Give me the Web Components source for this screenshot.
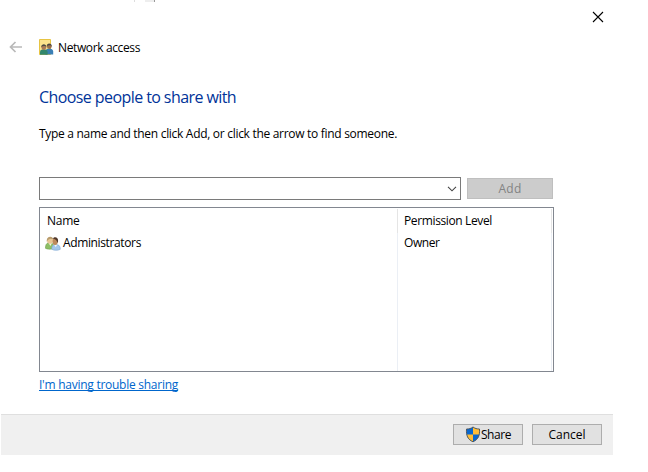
<!DOCTYPE html>
<html lang="en">
<head>
<meta charset="utf-8">
<title>Network access</title>
<style>
  body {
    margin: 0;
    background: #fff;
    color: #000;
    font: 12px/16px "Open Sans", "Noto Sans", sans-serif;
  }
</style>
</head>
<body>
<share-dialog></share-dialog>

<script>
// One line of text, letter-spaced to fill the given width
class FitText extends HTMLElement {
    constructor() {
        super();
        this.attachShadow({mode: 'open'}).innerHTML = `
          <style>
            :host { display: block; white-space: nowrap; }
            span { display: inline-block; }
          </style>
          <span><slot></slot></span>`;
    }
    connectedCallback() {
        let span = this.shadowRoot.querySelector('span');
        let width = Number(this.getAttribute('width'));
        let count = this.textContent.length;
        let spacing = (width - span.getBoundingClientRect().width) / count;
        span.style.letterSpacing = spacing.toFixed(3) + 'px';
    }
}

const icons = {
    back: `<svg width="14" height="12" viewBox="0 0 14 12" fill="none" stroke="#b9b9b9" stroke-width="1.7">
        <path d="M1.500 6H13M6.500 1L1.500 6l5 5"/></svg>`,
    close: `<svg width="12" height="12" viewBox="0 0 12 12" stroke="#000" stroke-width="1.1">
        <path d="M1 1l10 10M11 1L1 11"/></svg>`,
    chevron: `<svg width="10" height="6" viewBox="0 0 10 6" fill="none" stroke="#444" stroke-width="1.1">
        <path d="M1 .8l4 4 4-4"/></svg>`,
    network: `<svg width="15" height="17" viewBox="0 0 15 17">
        <path d="M.5.5h11v15H.5z" fill="#fbe28c" stroke="#e7c443"/>
        <path d="M6.500 15.500v-3c0-2 1.600-3 3.700-3s4 1 4 3v3z" fill="#3a7fb5"/>
        <circle cx="10.300" cy="7.600" r="2.400" fill="#99704e"/>
        <path d="M7.700 7.300c0-4 5.300-3.700 5.200.4-1-1.600-3-2-5.200-.4z" fill="#4b4741"/>
        <path d="M1 15.800v-2.600c0-2.200 1.500-3 3.600-3s4 .8 4 3v2.600z" fill="#32866c"/>
        <circle cx="4.800" cy="8.500" r="2.400" fill="#a97a56"/>
        <path d="M2.200 8.200c.1-3.900 5.200-3.800 5.200 0-1-1.400-3.200-1.800-5.200 0z" fill="#4d4a42"/></svg>`,
    people: `<svg width="16" height="15" viewBox="0 0 16 15">
        <path d="M.5 12.300c0-4 1.200-5.600 4.200-5.600s4.200 1.800 4.200 5.600c-2 1.200-6.400 1.200-8.400 0z" fill="#8fbf66" stroke="#6a9d48" stroke-width=".6"/>
        <path d="M3.600 7l1.800 3L7 7z" fill="#eef4e4"/>
        <ellipse cx="5" cy="4.500" rx="2.900" ry="3.300" fill="#e8c795"/>
        <path d="M1.800 5.800C.8-.3 8-.9 8.200 3.500c-2-1-4.600-1.200-6.400 2.300z" fill="#b79b6c"/>
        <path d="M6.800 13.300c0-3.400 1-4.800 4-4.800s4.500 1.400 4.500 4.800c-2 1.300-6.500 1.300-8.500 0z" fill="#a3c8ec" stroke="#7da8d4" stroke-width=".6"/>
        <path d="M9 8.600l1.700 2.600 1.600-2.600z" fill="#edf5fc"/>
        <ellipse cx="10.100" cy="5.600" rx="2.600" ry="3.500" fill="#bd8a5b"/>
        <path d="M8 2.700C9 .2 13.600.8 13.100 5.300l-.8 1.900c-.1-2.400-1.200-4-4.300-4.500z" fill="#52382b"/></svg>`,
    shield: `<svg width="16" height="17" viewBox="0 0 16 17">
        <path id="bg" d="M8 1C6 2.500 4 3 1.500 3c-.4 6.500 1 10.300 6.500 12.800C13.500 13.300 14.900 9.500 14.500 3 12 3 10 2.500 8 1z" fill="#0867cf"/>
        <path d="M8 1c2 1.500 4 2 6.500 2 .1 2.100 0 3.900-.3 5.500H8zM1.800 8.500H8v7.300C4.300 14.100 2.400 11.800 1.800 8.500z" fill="#ffbd37"/>
        <path d="M8 1C6 2.500 4 3 1.500 3c-.4 6.500 1 10.300 6.500 12.800C13.500 13.300 14.900 9.500 14.500 3 12 3 10 2.500 8 1z" fill="none" stroke="#4c5157" stroke-width=".9"/></svg>`
};

class UiIcon extends HTMLElement {
    constructor() {
        super();
        this.attachShadow({mode: 'open'});
    }
    connectedCallback() {
        this.shadowRoot.innerHTML = `
          <style>
            :host { display: block; flex: none; }
            svg { display: block; }
          </style>
          ${icons[this.getAttribute('name')]}`;
    }
}

class PushButton extends HTMLElement {
    constructor() {
        super();
        this.attachShadow({mode: 'open'}).innerHTML = `
          <style>
            :host {
              display: flex;
              align-items: center;
              justify-content: center;
              box-sizing: border-box;
              width: 70px;
              height: 21px;
              border: 1px solid #adadad;
              background: #e1e1e1;
            }
            :host([disabled]) {
              width: 86px;
              border-color: #bfbfbf;
              background: #ccc;
              color: #838383;
            }
          </style>
          <slot name="icon"></slot><slot></slot>`;
    }
}

class ComboBox extends HTMLElement {
    constructor() {
        super();
        this.attachShadow({mode: 'open'}).innerHTML = `
          <style>
            :host {
              display: flex;
              align-items: center;
              justify-content: flex-end;
              box-sizing: border-box;
              width: 422px;
              height: 23px;
              padding-right: 3px;
              border: 1px solid #7a7a7a;
            }
          </style>
          <ui-icon name="chevron"></ui-icon>`;
    }
}

class PeopleList extends HTMLElement {
    constructor() {
        super();
        this.attachShadow({mode: 'open'}).innerHTML = `
          <style>
            :host {
              display: grid;
              grid-template-columns: 358px 154px;
              box-sizing: border-box;
              width: 515px;
              height: 165px;
              padding-top: 1px;
              border: 1px solid #828790;
            }
            .col { border-right: 1px solid #ebeff5; }
            .head {
              height: 20px;
              margin-right: -1px;
              padding: 4px 0 0 7px;
              border-right: 1px solid #e5e5e5;
            }
            .level .head { padding-left: 6px; }
            .cell { display: flex; padding: 2px 0 0 5px; gap: 2px; }
            .level .cell { padding-left: 6px; }
          </style>
          <div class="col">
            <div class="head"><slot name="name-head"></slot></div>
            <div class="cell"><slot name="name"></slot></div>
          </div>
          <div class="col level">
            <div class="head"><slot name="level-head"></slot></div>
            <div class="cell"><slot name="level"></slot></div>
          </div>`;
    }
}

class ShareDialog extends HTMLElement {
    constructor() {
        super();
        this.attachShadow({mode: 'open'}).innerHTML = `
          <style>
            :host {
              display: flex;
              flex-direction: column;
              width: 612px;
              height: 455px;
              margin-left: 1px;
            }
            /* edge of the window behind */
            .behind { display: flex; height: 2px; padding-left: 133px; gap: 10px; }
            .behind i { width: 1px; background: #ddd; }
            .behind i + i { width: 9px; background: #eee; border-right: 1px solid #999; }
            .top { display: flex; justify-content: flex-end; height: 22px; padding: 9px 9px 0 0; }
            .title { display: flex; align-items: center; height: 20px; margin-top: 4px; padding-left: 8px; }
            .title ui-icon + ui-icon { margin: 0 4px 0 16px; }
            .title fit-text { padding-top: 2px; }
            main { display: flex; flex-direction: column; flex: 1; padding: 28px 0 0 38px; }
            .heading { color: #039; font-size: 16px; line-height: 24px; }
            .hint { margin-top: 17px; }
            .row { display: flex; align-items: center; gap: 6px; margin: 35px 0 7px; }
            .entry { display: flex; align-items: center; gap: 2px; }
            .link {
              align-self: flex-start;
              height: 13px;
              margin-top: 5px;
              color: #0066cc;
              border-bottom: 1px solid #0066cc;
            }
            footer {
              display: flex;
              justify-content: flex-end;
              gap: 9px;
              box-sizing: border-box;
              height: 41px;
              padding: 9px 11px 0 0;
              border-top: 1px solid #dfdfdf;
              background: #f0f0f0;
            }
          </style>
          <div class="behind"><i></i><i></i></div>
          <div class="top"><ui-icon name="close"></ui-icon></div>
          <div class="title">
            <ui-icon name="back"></ui-icon>
            <ui-icon name="network"></ui-icon>
            <fit-text width="82">Network access</fit-text>
          </div>
          <main>
            <fit-text class="heading" width="197">Choose people to share with</fit-text>
            <fit-text class="hint" width="358">Type a name and then click Add, or click the arrow to find someone.</fit-text>
            <div class="row">
              <combo-box></combo-box>
              <push-button disabled><fit-text width="23">Add</fit-text></push-button>
            </div>
            <people-list>
              <fit-text slot="name-head" width="32.5">Name</fit-text>
              <div class="entry" slot="name">
                <ui-icon name="people"></ui-icon>
                <fit-text width="78">Administrators</fit-text>
              </div>
              <fit-text slot="level-head" width="88">Permission Level</fit-text>
              <fit-text slot="level" width="35.5">Owner</fit-text>
            </people-list>
            <fit-text class="link" width="139">I'm having trouble sharing</fit-text>
          </main>
          <footer>
            <push-button><ui-icon slot="icon" name="shield"></ui-icon><fit-text width="30">Share</fit-text></push-button>
            <push-button><fit-text width="37">Cancel</fit-text></push-button>
          </footer>`;
    }
}

customElements.define('fit-text', FitText);
customElements.define('ui-icon', UiIcon);
customElements.define('push-button', PushButton);
customElements.define('combo-box', ComboBox);
customElements.define('people-list', PeopleList);
customElements.define('share-dialog', ShareDialog);
</script>
</body>
</html>
